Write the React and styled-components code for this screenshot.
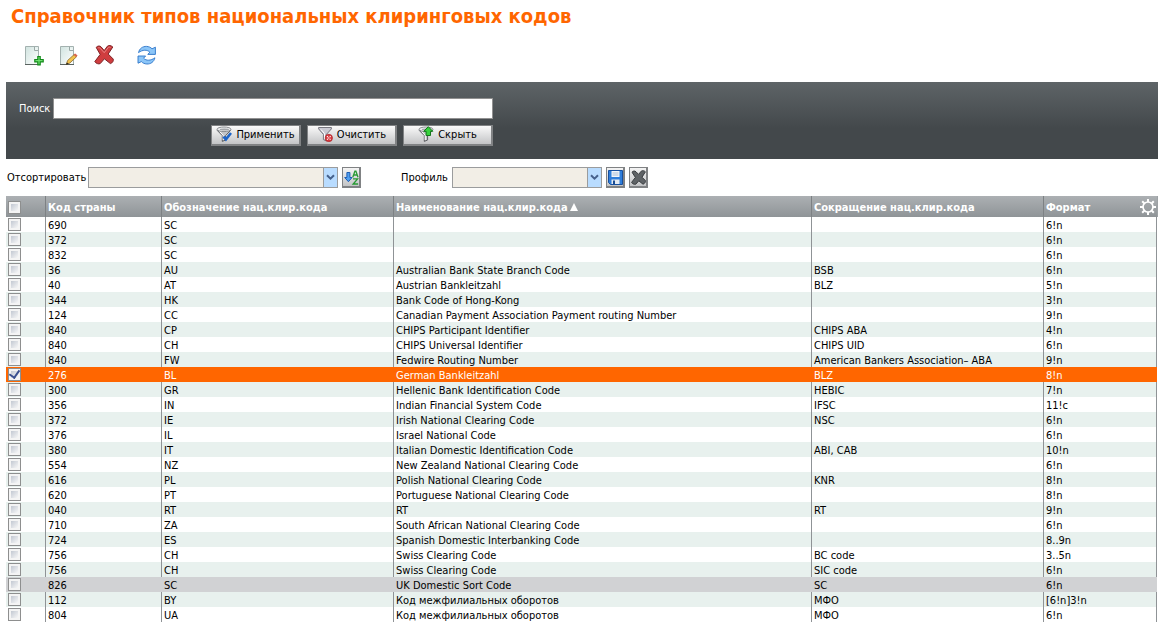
import React, { useState } from 'react';
import styled, { createGlobalStyle } from 'styled-components';

const font = `'DejaVu Sans Condensed', 'DejaVu Sans', 'Noto Sans', sans-serif`;

const color = {
  accent: '#ff6600',
  line: '#8f9396',
  stripe: '#e8f1ee',
  hover: '#d1d2d4',
  field: '#f2eee6',
  arrow: '#b9dcff',
};

const columns = [
  { key: 'country', title: 'Код страны', width: '116px' },
  { key: 'type', title: 'Обозначение нац.клир.кода', width: '232px' },
  { key: 'name', title: 'Наименование нац.клир.кода', width: 'auto', sorted: true },
  { key: 'short', title: 'Сокращение нац.клир.кода', width: '232px' },
  { key: 'format', title: 'Формат', width: '113px', settings: true },
];

const rows = [
  ['690', 'SC', '', '', '6!n'],
  ['372', 'SC', '', '', '6!n'],
  ['832', 'SC', '', '', '6!n'],
  ['36', 'AU', 'Australian Bank State Branch Code', 'BSB', '6!n'],
  ['40', 'AT', 'Austrian Bankleitzahl', 'BLZ', '5!n'],
  ['344', 'HK', 'Bank Code of Hong-Kong', '', '3!n'],
  ['124', 'CC', 'Canadian Payment Association Payment routing Number', '', '9!n'],
  ['840', 'CP', 'CHIPS Participant Identifier', 'CHIPS ABA', '4!n'],
  ['840', 'CH', 'CHIPS Universal Identifier', 'CHIPS UID', '6!n'],
  ['840', 'FW', 'Fedwire Routing Number', 'American Bankers Association– ABA', '9!n'],
  ['276', 'BL', 'German Bankleitzahl', 'BLZ', '8!n'],
  ['300', 'GR', 'Hellenic Bank Identification Code', 'HEBIC', '7!n'],
  ['356', 'IN', 'Indian Financial System Code', 'IFSC', '11!c'],
  ['372', 'IE', 'Irish National Clearing Code', 'NSC', '6!n'],
  ['376', 'IL', 'Israel National Code', '', '6!n'],
  ['380', 'IT', 'Italian Domestic Identification Code', 'ABI, CAB', '10!n'],
  ['554', 'NZ', 'New Zealand National Clearing Code', '', '6!n'],
  ['616', 'PL', 'Polish National Clearing Code', 'KNR', '8!n'],
  ['620', 'PT', 'Portuguese National Clearing Code', '', '8!n'],
  ['040', 'RT', 'RT', 'RT', '9!n'],
  ['710', 'ZA', 'South African National Clearing Code', '', '6!n'],
  ['724', 'ES', 'Spanish Domestic Interbanking Code', '', '8..9n'],
  ['756', 'CH', 'Swiss Clearing Code', 'BC code', '3..5n'],
  ['756', 'CH', 'Swiss Clearing Code', 'SIC code', '6!n'],
  ['826', 'SC', 'UK Domestic Sort Code', 'SC', '6!n'],
  ['112', 'BY', 'Код межфилиальных оборотов', 'МФО', '[6!n]3!n'],
  ['804', 'UA', 'Код межфилиальных оборотов', 'МФО', '6!n'],
];

const HIGHLIGHTED = 24;

function App() {
  const [selected, setSelected] = useState([10]);

  const toggle = (index) =>
    setSelected((prev) =>
      prev.includes(index) ? prev.filter((item) => item !== index) : [...prev, index]
    );

  const toggleAll = (e) => setSelected(e.target.checked ? rows.map((_, i) => i) : []);

  return (
    <>
      <GlobalStyle />
      <Page>
        <Title>Справочник типов национальных клиринговых кодов</Title>
        <Toolbar>
          <ToolGroup>
            <ToolButton type="button" aria-label="Создать">
              <AddIcon />
            </ToolButton>
            <ToolButton type="button" aria-label="Изменить">
              <EditIcon />
            </ToolButton>
            <ToolButton type="button" aria-label="Удалить">
              <DeleteIcon />
            </ToolButton>
          </ToolGroup>
          <ToolButton type="button" aria-label="Обновить">
            <RefreshIcon />
          </ToolButton>
        </Toolbar>

        <SearchPanel>
          <SearchForm onSubmit={(e) => e.preventDefault()}>
            <SearchRow>
              <Label htmlFor="search" $width="34px">
                Поиск
              </Label>
              <SearchInput id="search" type="text" />
            </SearchRow>
            <ButtonRow>
              <FilterButton type="submit">
                <ApplyIcon />
                Применить
              </FilterButton>
              <FilterButton type="reset">
                <ClearIcon />
                Очистить
              </FilterButton>
              <FilterButton type="button">
                <HideIcon />
                Скрыть
              </FilterButton>
            </ButtonRow>
          </SearchForm>
        </SearchPanel>

        <OptionsBar>
          <OptionGroup>
            <Label htmlFor="sort" $width="81px">
              Отсортировать
            </Label>
            <Dropdown id="sort" width="250px" />
            <SmallButton type="button" aria-label="Порядок сортировки">
              <SortIcon />
            </SmallButton>
          </OptionGroup>
          <OptionGroup>
            <Label htmlFor="profile" $width="51px">
              Профиль
            </Label>
            <Dropdown id="profile" width="150px" />
            <SmallButton type="button" aria-label="Сохранить профиль">
              <SaveIcon />
            </SmallButton>
            <SmallButton type="button" aria-label="Удалить профиль">
              <RemoveIcon />
            </SmallButton>
          </OptionGroup>
        </OptionsBar>

        <Table>
          <colgroup>
            <Col $width="40px" />
            {columns.map((column) => (
              <Col key={column.key} $width={column.width} />
            ))}
          </colgroup>
          <thead>
            <tr>
              <Th>
                <Checkbox
                  type="checkbox"
                  aria-label="Выбрать все"
                  checked={selected.length === rows.length}
                  onChange={toggleAll}
                />
              </Th>
              {columns.map((column) => (
                <Th key={column.key}>
                  <ThContent>
                    {column.title}
                    {column.sorted && <SortMark />}
                    {column.settings && (
                      <SettingsButton type="button" aria-label="Настройка колонок">
                        <GearIcon />
                      </SettingsButton>
                    )}
                  </ThContent>
                </Th>
              ))}
            </tr>
          </thead>
          <tbody>
            {rows.map((row, index) => (
              <Row
                key={index}
                $selected={selected.includes(index)}
                $highlighted={index === HIGHLIGHTED}
              >
                <CheckTd>
                  <Checkbox
                    type="checkbox"
                    aria-label={`Выбрать ${row[0]} ${row[1]}`}
                    checked={selected.includes(index)}
                    onChange={() => toggle(index)}
                  />
                </CheckTd>
                {row.map((value, i) => (
                  <Td key={columns[i].key}>{value}</Td>
                ))}
              </Row>
            ))}
          </tbody>
        </Table>
      </Page>
    </>
  );
}

export default App;

function Dropdown({ id, width }) {
  return (
    <SelectBox $width={width}>
      <Select id={id} defaultValue="">
        <option value="" />
      </Select>
      <Arrow>
        <svg width="9" height="7" viewBox="0 0 9 7">
          <path d="M1 1.2 4.5 4.7 8 1.2" fill="none" stroke="#46618c" strokeWidth="2" />
        </svg>
      </Arrow>
    </SelectBox>
  );
}

function SortMark() {
  return (
    <svg width="8" height="8" viewBox="0 0 8 8">
      <path d="M4 0 8 8H0z" fill="#fff" />
    </svg>
  );
}

function Sheet() {
  return (
    <>
      <path d="M1.5 1.5h13v18h-13z" fill="url(#sheet)" stroke="#a3b1af" />
      <path d="M1 19.5h14" stroke="#59625f" />
      <path d="M10.5 1.5v4h4" fill="#eef6f4" stroke="#9aa8a6" />
    </>
  );
}

function AddIcon() {
  return (
    <svg width="20" height="21" viewBox="0 0 20 21">
      <defs>
        <linearGradient id="sheet" x1="0" y1="0" x2="1" y2="1">
          <stop offset="0" stopColor="#d0e3df" />
          <stop offset="1" stopColor="#fff" />
        </linearGradient>
      </defs>
      <Sheet />
      <path
        d="M13.8 11.5h2.4v3h3v2.4h-3v3h-2.4v-3h-3v-2.4h3z"
        fill="#6fe070"
        stroke="#138a1b"
        strokeWidth="1.2"
      />
    </svg>
  );
}

function EditIcon() {
  return (
    <svg width="20" height="21" viewBox="0 0 20 21">
      <Sheet />
      <path d="m7.4 19.3 1.2-3.8 6.6-6 2.4 2.2-6.8 6.4z" fill="#f2c24c" stroke="#8b6a2a" strokeWidth=".8" />
      <path d="m14.6 9.8 1.6-1.4 2.4 2.2-1.6 1.4z" fill="#d9654f" />
      <path d="m7 19.8.9-2.4 1.8 1.6z" fill="#222" />
    </svg>
  );
}

function DeleteIcon() {
  return (
    <svg width="20" height="21" viewBox="0 0 20 21">
      <path
        d="M2.2 2.4C3.8.6 6 .6 7.2 2L10.2 5.6l3.2-4.4c1.2-1.2 3.8-.8 5.4.8L14.2 9l5 5c.6 1.6-.6 4-2.8 4.6l-6-4.8-4.2 4.8c-1.6.8-4.4-.2-5.4-2L6.2 9.4z"
        fill="#cf3d3f"
        stroke="#7e2326"
        strokeLinejoin="round"
      />
      <path d="M3.8 3.2c1-.9 1.8-.7 2.6.3l3.8 4.2 4.2-5.3c.8-.5 1.6-.3 2.2.2" fill="none" stroke="#ea8585" />
    </svg>
  );
}

function RefreshIcon() {
  return (
    <svg width="20" height="21" viewBox="0 0 20 21">
      <path
        id="turn"
        d="M1.5 7.6C2.4 3.6 5.6 1.2 9.6 1.4c2.2.1 4.2 1 5.4 2.4L18.4 2.2V9.4H10.8l2-2.2C10.2 4.4 5.6 4.6 1.5 7.6z"
        fill="#8cc6f8"
        stroke="#2b74c8"
        strokeWidth=".9"
        strokeLinejoin="round"
      />
      <use href="#turn" transform="rotate(180 9.7 10.2)" />
    </svg>
  );
}

function Funnel() {
  return (
    <>
      <path d="M1 4.2 6.3 9.6V15.4L9.6 14V9.6L14.8 4.2z" fill="#c4c6c9" stroke="#5a5d61" />
      <path d="M3.4 5.4 7.2 9.3V14" fill="none" stroke="#fff" />
      <ellipse cx="8" cy="3.3" rx="7" ry="2.3" fill="#eceeef" stroke="#8a8d91" />
      <ellipse cx="8.4" cy="3.5" rx="4.6" ry="1" fill="#a3a6aa" />
    </>
  );
}

function ApplyIcon() {
  return (
    <svg width="16" height="16" viewBox="0 0 16 16">
      <Funnel />
      <path d="m7.4 10.6 2.5 2.8L15 7" fill="none" stroke="#1c64c8" strokeWidth="2.6" />
    </svg>
  );
}

function ClearIcon() {
  return (
    <svg width="16" height="16" viewBox="0 0 16 16">
      <path d="M1.6 1.5h12.8v1.4L9.4 8.4V15L6.4 13.6V8.4L1.6 2.9z" fill="#c9c9d2" stroke="#77777f" />
      <path d="M4 3.5 7.5 7.6V13" fill="none" stroke="#fff" />
      <circle cx="11.8" cy="12" r="3.7" fill="#d8383d" stroke="#a31d22" strokeWidth=".6" />
      <path d="m10 10.2 3.6 3.6m0-3.6L10 13.8" stroke="#fff" strokeWidth="1.1" strokeDasharray="1.2 .7" />
    </svg>
  );
}

function HideIcon() {
  return (
    <svg width="16" height="16" viewBox="0 0 16 16">
      <Funnel />
      <path d="M10.3.7 14.8 5.3h-2.3v4.2H8.1V5.3H5.8z" fill="#37d23d" stroke="#13761a" />
    </svg>
  );
}

function SortIcon() {
  return (
    <svg width="15" height="15" viewBox="0 0 15 15">
      <path d="M2.9 2.5h3v5h2.2L4.4 11.7.7 7.5h2.2z" fill="#4f9ff0" stroke="#1d5db4" />
      <path d="m8.8 7.2 2.1-6h1l2.1 6M9.6 5h3.6" fill="none" stroke="#2a9a35" strokeWidth="1.3" />
      <path d="M9 8.9h4.6L9.2 14h4.9" fill="none" stroke="#2a9a35" strokeWidth="1.4" />
    </svg>
  );
}

function SaveIcon() {
  return (
    <svg width="15" height="15" viewBox="0 0 15 15">
      <path d="M.5.5h14v14h-12l-2-2z" fill="#2f7edb" stroke="#174f9e" />
      <path d="M3.5 1h8v6h-8z" fill="#f3f6fa" />
      <path d="M4.5 3h6M4.5 5h6" stroke="#a9bed8" />
      <path d="M3.5 9.5h8V14h-8z" fill="#e4ebf3" />
      <path d="M5 10.5h2V14H5z" fill="#1b4c93" />
    </svg>
  );
}

function RemoveIcon() {
  return (
    <svg width="15" height="15" viewBox="0 0 15 15">
      <path
        d="M1 2.2C2 .8 3.8.6 5 1.8l2.6 2.6L10.2 1.2c1.2-1 3-.6 4.2.6L11 7.2l3.4 3.4c.4 1.4-.8 3.2-2.4 3.6L7.8 10.8 4.8 14.2c-1.4.5-3.4-.4-4.2-1.8L4.4 7.4z"
        fill="#5f6366"
        stroke="#3a3d40"
        strokeLinejoin="round"
      />
    </svg>
  );
}

function GearIcon() {
  return (
    <svg width="16" height="16" viewBox="0 0 16 16" fill="none" stroke="#fff">
      <circle cx="8" cy="8" r="5" strokeWidth="1.7" />
      <path
        d="M8 0v3M8 13v3M0 8h3M13 8h3M2.2 2.2l2 2M11.8 11.8l2 2M2.2 13.8l2-2M11.8 4.2l2-2"
        strokeWidth="2"
      />
    </svg>
  );
}

const GlobalStyle = createGlobalStyle`
  * {
    box-sizing: border-box;
  }

  body {
    margin: 0;
    background: #fff;
    color: #000;
    font: 11px/15px ${font};
  }

  button, input, select {
    margin: 0;
    font: inherit;
    color: inherit;
  }

  svg {
    display: block;
    flex: none;
  }
`;

const Page = styled.main`
  padding: 4px 5px 8px 6px;
`;

const Title = styled.h1`
  margin: 0;
  padding-left: 5px;
  color: ${color.accent};
  font-size: 20px;
  font-weight: bold;
  line-height: 24px;
`;

const Toolbar = styled.div`
  display: flex;
  gap: 23px;
  padding: 17px 18px 16px;
`;

const ToolGroup = styled.div`
  display: flex;
  gap: 15px;
`;

const ToolButton = styled.button`
  padding: 0;
  border: 0;
  background: none;
  cursor: pointer;
`;

const SearchPanel = styled.section`
  padding: 16px 13px 13px;
  background: linear-gradient(#5e6467, #43484b 60%);
`;

const SearchForm = styled.form`
  display: flex;
  flex-direction: column;
  gap: 6px;
  max-width: 474px;
`;

const SearchRow = styled.div`
  display: flex;
  align-items: center;
  color: #fff;
`;

const Label = styled.label`
  flex: none;
  width: ${({ $width }) => $width};
  white-space: nowrap;
`;

const SearchInput = styled.input`
  flex: 1;
  min-width: 0;
  height: 21px;
  padding: 0 3px;
  border: 1px solid #919191;
  background: #fff;
  color: #000;
`;

const ButtonRow = styled.div`
  display: flex;
  justify-content: flex-end;
  gap: 6px;
`;

const FilterButton = styled.button`
  display: flex;
  align-items: center;
  justify-content: center;
  gap: 4px;
  width: 90px;
  height: 21px;
  padding: 0 0 2px;
  border: 1px solid #808284;
  border-right-width: 2px;
  border-bottom-width: 2px;
  background: linear-gradient(#fafafa, #c3c4c6);
  white-space: nowrap;
  cursor: pointer;
`;

const OptionsBar = styled.div`
  display: flex;
  flex-wrap: wrap;
  gap: 40px;
  padding: 8px 1px;
`;

const OptionGroup = styled.div`
  display: flex;
  align-items: center;
  gap: 4px;

  ${Label} {
    margin-right: -4px;
  }
`;

const SelectBox = styled.div`
  position: relative;
  width: ${({ $width }) => $width};
  height: 21px;
`;

const Select = styled.select`
  width: 100%;
  height: 100%;
  padding: 0 18px 0 3px;
  border: 1px solid #9b9c9d;
  border-radius: 0;
  background: ${color.field};
  appearance: none;
`;

const Arrow = styled.span`
  position: absolute;
  top: 1px;
  right: 1px;
  bottom: 1px;
  width: 14px;
  display: flex;
  align-items: center;
  justify-content: center;
  border-left: 1px solid #9b9c9d;
  background: ${color.arrow};
  pointer-events: none;
`;

const SmallButton = styled.button`
  display: flex;
  align-items: center;
  justify-content: center;
  width: 19px;
  height: 21px;
  padding: 0;
  border: 1px solid #808284;
  border-right-width: 2px;
  border-bottom-width: 2px;
  background: linear-gradient(#f4f4f4, #c3c4c6);
  cursor: pointer;
`;

const Table = styled.table`
  width: calc(100% - 1px);
  table-layout: fixed;
  border-collapse: separate;
  border-spacing: 0;
`;

const Col = styled.col`
  width: ${({ $width }) => $width};
`;

const Th = styled.th`
  height: 21px;
  padding: 1px 0 0 2px;
  border-right: 1px solid #7d8184;
  background: linear-gradient(#acb0b3, #8f9497) border-box;
  color: #fff;
  font-weight: bold;
  text-align: left;
  white-space: nowrap;

  &:last-child {
    border-right: 0;
    box-shadow: 1px 0 #9da2a5;
  }
`;

const ThContent = styled.div`
  display: flex;
  align-items: center;
  gap: 2px;
`;

const SettingsButton = styled.button`
  margin-left: auto;
  padding: 0 1px 0 0;
  border: 0;
  background: none;
  cursor: pointer;
`;

const Td = styled.td`
  height: 15px;
  padding: 2px 0 0 2px;
  border-right: 1px solid ${color.line};
  line-height: 13px;
  white-space: nowrap;
`;

const CheckTd = styled(Td)`
  padding-top: 1px;
  vertical-align: top;
`;

const Row = styled.tr`
  &:nth-child(even) {
    background: ${color.stripe};
  }

  && {
    ${({ $highlighted }) => $highlighted && `background: ${color.hover};`}
    ${({ $selected }) => $selected && `background: ${color.accent}; color: #fff;`}
  }

  ${Td} {
    ${({ $selected, $highlighted }) =>
      ($selected || $highlighted) && 'border-right-color: transparent;'}
  }
`;

const Checkbox = styled.input`
  display: grid;
  place-items: center;
  width: 13px;
  height: 13px;
  padding: 2px;
  border: 1px solid #8e8f8f;
  background:
    linear-gradient(135deg, #c2c8d2, #f7f7f7) content-box,
    linear-gradient(#f4f4f4, #f4f4f4) border-box;
  appearance: none;

  &:checked::before {
    content: '';
    width: 5px;
    height: 8px;
    margin-top: -3px;
    border: solid #3a4f8f;
    border-width: 0 2px 2px 0;
    transform: rotate(35deg);
  }
`;
